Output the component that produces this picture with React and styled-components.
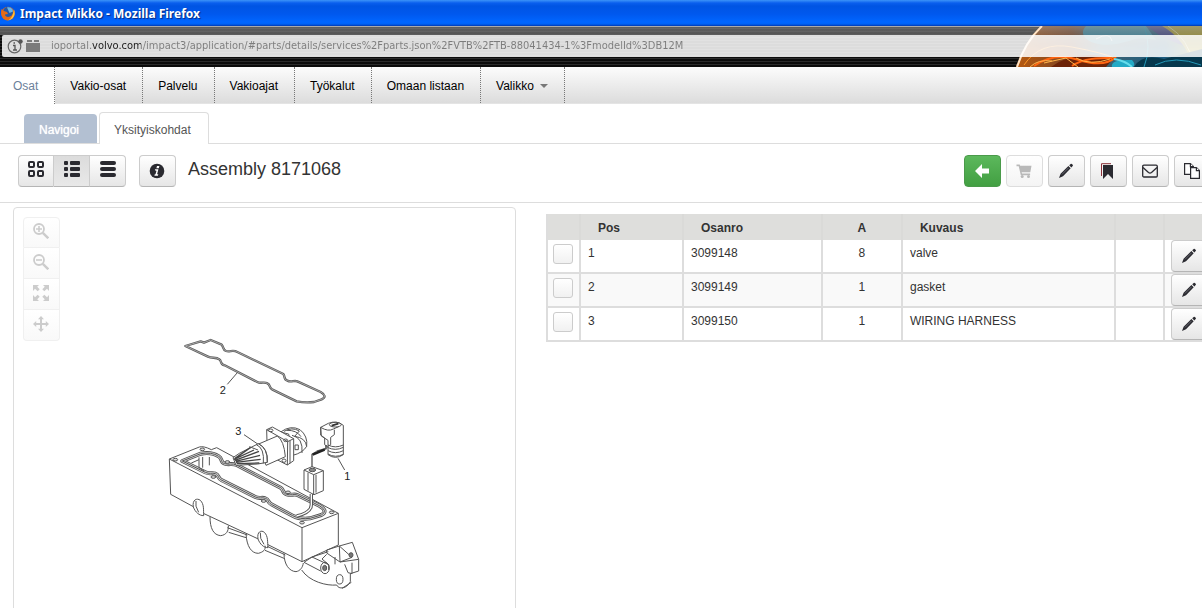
import React, { useState } from 'react'
import styled, { createGlobalStyle, css } from 'styled-components'

const GlobalStyle = createGlobalStyle`
  * {
    box-sizing: border-box;
  }

  body {
    margin: 0;
    overflow: hidden;
    background: #fff;
    color: #333;
    font-family: "Liberation Sans", Arial, sans-serif;
    font-size: 12px;
    line-height: 18px;
  }
`

const TitleBar = styled.header`
  display: flex;
  align-items: center;
  gap: 4px;
  height: 26px;
  padding-top: 1px;
  background: linear-gradient(#3c93f8 0, #0a5fee 3px, #0054e3 6px, #0058ee 14px, #0066ff 22px, #0062f5 24px, #0038b0 26px);
  color: #fff;
  font: bold 12px/18px "Noto Sans", sans-serif;
  text-shadow: 1px 1px 1px #0a2a80;
`

const AddressBar = styled.div`
  position: relative;
  height: 41px;
  padding: 9px 0 10px 2px;
  overflow: hidden;
  background:
    linear-gradient(#aaa 0, #aaa 1px, rgba(130, 130, 130, 0.7) 1px, rgba(110, 110, 110, 0.7) 9px, transparent 9px),
    repeating-linear-gradient(#0c0c0c 0, #0c0c0c 2px, #2b2b2b 2px, #2b2b2b 3px);
`

const ThemeArt = styled.svg`
  position: absolute;
  top: 0;
  right: 0;
`

const AddressField = styled.label`
  position: relative;
  display: flex;
  align-items: center;
  gap: 7px;
  height: 22px;
  padding-left: 5px;
  border-radius: 2px 0 0 2px;
  background: rgba(255, 255, 255, 0.86);
`

// the host part of the address is darker than the rest
const AddressInput = styled.input`
  flex: 1;
  min-width: 0;
  height: 20px;
  padding: 0;
  border: 0;
  outline: none;
  background: linear-gradient(90deg, #7c7c7c 41px, #1c1c1c 41px, #1c1c1c 90px, #7c7c7c 90px);
  background-clip: text;
  color: transparent;
  font: 11px/20px "DejaVu Sans Condensed", "Noto Sans", sans-serif;
`

const Nav = styled.nav`
  display: flex;
  height: 37px;
  background: linear-gradient(#fcfcfc, #dcdcdc);
  border-bottom: 1px solid #e4e4e4;
`

const NavLink = styled.a`
  display: flex;
  align-items: center;
  gap: 6px;
  padding: 2px 16px 0 15px;
  border-right: 1px dotted #777;
  color: #000;
  text-decoration: none;

  ${props => props.$active && css`
    margin-bottom: -1px;
    padding-top: 0;
    padding-left: 13px;
    background: #fff;
    color: #6c7f9a;
  `}
`

const Caret = styled.span`
  border: 4px solid transparent;
  border-top-color: #777;
  border-bottom: 0;
`

const Tabs = styled.div`
  display: flex;
  align-items: flex-end;
  gap: 2px;
  height: 40px;
  padding-left: 24px;
  border-bottom: 1px solid #ddd;
`

const Tab = styled.a`
  height: 29px;
  padding: 7px 18px 0 15px;
  border-radius: 4px 4px 0 0;
  background: #b3c0d2;
  color: #fff;
  text-decoration: none;
  text-shadow: 0 0 1px #fff;

  ${props => props.$active && css`
    height: 32px;
    margin-bottom: -1px;
    padding: 8px 17px 0 14px;
    border: 1px solid #ddd;
    border-bottom: 0;
    background: #fff;
    color: #555;
    text-shadow: none;
  `}
`

const Toolbar = styled.div`
  display: flex;
  align-items: center;
  height: 59px;
  margin-right: -9px;
  padding: 0 0 4px 18px;
  border-bottom: 1px solid #ddd;
`

const Button = styled.button`
  display: inline-flex;
  align-items: center;
  justify-content: center;
  width: 37px;
  height: 32px;
  padding: 0 1px 0 0;
  border: 1px solid #ccc;
  border-bottom-color: #b5b5b5;
  border-radius: 4px;
  background: linear-gradient(#fff, #e6e6e6);
  color: #2a2a30;

  &:disabled {
    border-color: #ddd;
    background: linear-gradient(#fff, #f4f4f4);
    color: #b9b9b9;
  }

  ${props => props.$success && css`
    border-color: #4a9a4a;
    background: linear-gradient(#5cb85c, #429f42);
    color: #fff;
  `}
`

const ButtonGroup = styled.div`
  display: flex;
  margin-right: 13px;

  ${Button} {
    width: 36px;
    padding: 0 0 4px;
    border-radius: 0;
  }

  ${Button}:first-child {
    border-radius: 4px 0 0 4px;
  }

  ${Button}:last-child {
    border-radius: 0 4px 4px 0;
  }

  ${Button} + ${Button} {
    border-left: 0;
  }

  ${Button}[aria-pressed="true"] {
    background: linear-gradient(#dcdcdc, #e8e8e8);
  }
`

const Heading = styled.h1`
  margin: 0 auto 4px 12px;
  font-size: 18px;
  font-weight: 400;
  line-height: 24px;
`

const Actions = styled.div`
  display: flex;
  gap: 5px;
`

const Content = styled.main`
  display: grid;
  grid-template-columns: 23fr 30fr;
  gap: 30px;
  padding: 4px 0 0 13px;
`

const Viewer = styled.section`
  position: relative;
  display: flex;
  justify-content: center;
  min-height: 440px;
  padding: 122px 0 0 2px;
  border: 1px solid #ddd;
  border-radius: 4px;
`

const ZoomControls = styled.div`
  position: absolute;
  top: 9px;
  left: 9px;
  display: flex;
  flex-direction: column;
`

const ZoomButton = styled.button`
  display: flex;
  align-items: center;
  justify-content: center;
  width: 37px;
  height: 31px;
  padding: 0 1px 3px 0;
  border: 1px solid #f0f0f0;
  border-top-width: 0;
  background: linear-gradient(#fff, #f9f9f9);
  color: #ccc;

  &:first-child {
    border-top-width: 1px;
    border-radius: 4px 4px 0 0;
  }

  &:last-child {
    border-radius: 0 0 4px 4px;
  }
`

const PartsSection = styled.section`
  margin-right: -43px;
  padding-top: 7px;
`

const PartsTable = styled.table`
  width: 100%;
  table-layout: fixed;
  border-collapse: separate;
  border-spacing: 0;
  border-left: 2px solid #ddd;
`

const HeadCell = styled.th`
  width: ${props => props.$width || 'auto'};
  height: 26px;
  padding: ${props => props.$center ? '2px 0 0' : '2px 0 0 17px'};
  border-right: 2px solid #dadad8;
  background: #dededc;
  text-align: ${props => props.$center ? 'center' : 'left'};
`

const Row = styled.tr`
  background: #fff;

  &:nth-child(even) {
    background: #f9f9f9;
  }
`

const Cell = styled.td`
  height: 34px;
  padding: ${props => props.$control ? '0 0 0 6px' : '4px 7px 0'};
  border-right: 2px solid #ddd;
  border-bottom: 2px solid #ddd;
  text-align: ${props => props.$center ? 'center' : 'left'};
  vertical-align: top;

  ${Button} {
    display: flex;
  }
`

const Checkbox = styled.input`
  display: block;
  appearance: none;
  width: 20px;
  height: 20px;
  margin: 4px 0 0 -1px;
  border: 1px solid #ccc;
  border-radius: 3px;
  background: linear-gradient(#fff, #f1f1f1);

  &:checked {
    background: #b3c0d2;
  }
`

const Icon = ({ size = 16, children }) => (
  <svg width={size} height={size} viewBox="0 0 16 16" fill="currentColor" aria-hidden="true">{children}</svg>
)

const GridIcon = () => (
  <Icon>
    <g fill="none" stroke="currentColor" strokeWidth="2">
      <rect x="1" y="1" width="5" height="5" rx="1" />
      <rect x="10" y="1" width="5" height="5" rx="1" />
      <rect x="1" y="10" width="5" height="5" rx="1" />
      <rect x="10" y="10" width="5" height="5" rx="1" />
    </g>
  </Icon>
)

const ListIcon = () => (
  <Icon>
    {[0, 6, 12].map(y => (
      <g key={y}>
        <rect x="0" y={y} width="4" height="4" rx="1" />
        <rect x="6" y={y} width="10" height="4" rx="1" />
      </g>
    ))}
  </Icon>
)

const BarsIcon = () => (
  <Icon>
    {[0, 6, 12].map(y => <rect key={y} x="0" y={y} width="16" height="4" rx="2" />)}
  </Icon>
)

const InfoIcon = () => (
  <Icon>
    <circle cx="8" cy="8" r="7.3" />
    <path d="M8 3h2.4l-.6 2.2H7.4zM5.8 6.3h3.6l-1.3 5h1.2l-.4 1.4H5.4l.4-1.4h.7l1-3.6h-1z" fill="#fff" />
  </Icon>
)

const ArrowIcon = () => (
  <Icon>
    <path d="M1 8 8 1v4.6h7v4.8H8V15z" />
  </Icon>
)

const CartIcon = () => (
  <Icon>
    <path d="M.5 1.5h3.2l.5 1.3h11.3l-1.2 6.4H5.6l.5 1.3h8v1.7H4.8L2.7 3.2H.5z" />
    <circle cx="6.2" cy="13.6" r="1.5" />
    <circle cx="12.5" cy="13.6" r="1.5" />
  </Icon>
)

const PencilIcon = () => (
  <Icon>
    <path d="M11.2 2.2 13 .7c.6-.4 2.4 1.4 1.900 2L13.400 4.500zM10.400 3l2.300 2.300-7.700 8L1 15l1.600-4.200z" />
    <path d="M4 11.400 10.600 4.800" stroke="#8d8d98" strokeWidth=".6" />
  </Icon>
)

const BookmarkIcon = () => (
  <Icon>
    <path d="M1.500 13V.7H11" fill="none" stroke="#8c3038" strokeWidth="1" />
    <path d="M3 2h10v14l-5-5-5 5z" />
  </Icon>
)

const MailIcon = () => (
  <Icon>
    <g fill="none" stroke="currentColor" strokeWidth="1.300">
      <rect x=".7" y="2.200" width="14.600" height="11.800" rx="1.200" />
      <path d="m1 4.500 5.500 5q1.500 1.200 3 0l5.500-5" />
    </g>
  </Icon>
)

const CopyIcon = () => (
  <Icon>
    <g fill="#fff" stroke="currentColor" strokeWidth="1.200">
      <path d="M.6.6h5.800l3 3v7.800H.6z" />
      <path d="M6.400.6v3h3" />
      <path d="M6.600 4.600h5.800l3 3v7.800H6.600z" />
      <path d="M12.400 4.600v3h3" />
    </g>
  </Icon>
)

const ZoomIcon = ({ plus }) => (
  <Icon>
    <g fill="none" stroke="currentColor">
      <circle cx="6" cy="6" r="5" strokeWidth="1.800" />
      <path d="m9.800 9.800 5.500 5.500" strokeWidth="2.400" />
      <path d={plus ? 'M3 6h6M6 3v6' : 'M3 6h6'} strokeWidth="1.600" />
    </g>
  </Icon>
)

const ExpandIcon = () => (
  <Icon>
    <path d="M0 0h6L4.200 1.800 6.700 4.300 4.700 6.300 2 3.800 0 6zM16 0h-6l1.800 1.800-2.500 2.500 2 2L14 3.800l2 2.200zM0 16h6l-1.800-1.800 2.500-2.500-2-2L2 12.200 0 10zM16 16h-6l1.800-1.800-2.500-2.500 2-2 2.700 2.500 2-2.200z" />
  </Icon>
)

const MoveIcon = () => (
  <Icon>
    <path d="m8 0 3 3.200H9V7h3.800V5L16 8l-3.200 3V9H9v3.800h2L8 16l-3-3.200h2V9H3.200v2L0 8l3.200-3v2H7V3.200H5z" />
  </Icon>
)

const FirefoxLogo = () => (
  <svg width="16" height="16" viewBox="0 0 16 16" aria-hidden="true">
    <circle cx="8" cy="7.500" r="6.800" fill="#e66b16" />
    <circle cx="8" cy="6" r="5" fill="#2459a8" />
    <path d="M7 1.500c3-1 6 1 6 4L9.500 7z" fill="#6ab5e6" />
    <path d="M1.500 3C0 9 3 14.500 8 14.500l1-3c-3 0-4-1.500-4-3l3-.5-1-2C5 5.500 3 4.500 1.500 3z" fill="#e66b16" />
    <path d="M14 3.500c2 5-.5 10-6 11 3-1.500 5-5 6-11z" fill="#fbc43c" />
  </svg>
)

const SiteIcons = () => (
  <svg width="37" height="16" viewBox="0 0 37 16" aria-hidden="true">
    <circle cx="7.500" cy="8.500" r="6.300" fill="none" stroke="#666" strokeWidth="1.200" />
    <path d="M6 7.500h2V12M6 12h4M6.500 5H8" fill="none" stroke="#555" strokeWidth="1.300" />
    <circle cx="13.500" cy="3.500" r="2.200" fill="#555" />
    <path d="M19 5h14v9H19zM20 2h5v2h-5zM27 2h5v2h-5z" fill="#7b7b7b" />
  </svg>
)

const GlassBall = () => (
  <ThemeArt width="186" height="41" viewBox="0 0 186 41" aria-hidden="true">
    <defs>
      <linearGradient id="ball">
        <stop offset="0" stopColor="#b75a10" />
        <stop offset=".3" stopColor="#7a4424" />
        <stop offset=".45" stopColor="#3f6472" />
        <stop offset=".8" stopColor="#1d5c80" />
        <stop offset="1" stopColor="#8a8a28" />
      </linearGradient>
      <linearGradient id="sheen" x2="0" y2="1">
        <stop offset="0" stopColor="#999" stopOpacity=".6" />
        <stop offset=".25" stopColor="#777" stopOpacity=".4" />
        <stop offset=".6" stopColor="#000" stopOpacity="0" />
      </linearGradient>
    </defs>
    <path d="M0 41Q8 16 25 0h161v41z" fill="url(#ball)" />
    <path d="M70 0c-10 10 6 22 30 18s14-8 40-4L130 0z" fill="#358ba6" />
    <path d="M130 0h22l16 20-20-8z" fill="#3c3f86" />
    <path d="M146 0q22 12 32 41h8V0z" fill="#a99b2b" />
    <path d="M152 0q20 12 27 41" stroke="#d8d48c" strokeWidth="1" fill="none" />
    <path d="M35 41q24-18 63-9l-8 9z" fill="#6d2408" />
    <path d="M96 41q-2-8 20-7 4 4 1 7z" fill="#23aac6" />
    <path d="M118 41q8-14 30-8l38-10v18z" fill="#06384d" />
    <g fill="none" strokeWidth="1">
      <path d="M8 39q16-24 48-18t42 11" stroke="#ff9826" />
      <path d="M18 40q20-14 45-6t37-3M56 40q12-9 40-8" stroke="#ff6511" strokeWidth="2" />
      <path d="M28 37l22-5 12 9M60 32q14 8 34 1M14 41q8-8 22-6" stroke="#ffb44b" />
      <path d="M98 33q12 2 18 8" stroke="#65ddec" strokeWidth="2" />
      <path d="M128 41q8-20 0-41M139 39q20-10 46 0" stroke="#2398b8" />
      <path d="M80 13q14-8 16 2" stroke="#d9f2f5" />
    </g>
    <path d="M0 41Q8 16 25 0h161v41z" fill="url(#sheen)" />
    <path d="M1 41Q9 16 26 0" fill="none" stroke="#ffe3c4" strokeWidth="2" />
  </ThemeArt>
)

const gasket = 'M106 48 152 34 162 38 182 30 215 44C222 52 218 60 228 63C240 67 248 58 262 66L400 132C406 140 400 148 412 152C424 158 432 150 442 154L512 186C526 194 528 202 515 208L492 216C475 218 455 217 440 214L366 178C356 172 362 164 352 160C342 154 334 162 322 156L224 106C208 102 216 92 208 88C198 80 186 86 174 80Z'

const groove = 'M97 78 152 56Q185 50 206 64C218 70 210 82 224 86C238 90 246 84 260 90L392 158C402 164 396 174 410 178C424 182 432 176 442 180L508 212Q536 228 514 240L480 250Q450 254 428 242L364 208C352 202 358 194 346 190C336 186 328 192 316 186L216 136C202 130 208 120 196 116C186 112 178 118 166 112Z'

const bolts = [[76, 74], [157, 43], [232, 81], [190, 126], [341, 198], [414, 172], [545, 232], [456, 263]]

const AssemblyDrawing = () => (
  <svg width="210" height="270" viewBox="30 0 630 810" fill="none" stroke="#555" strokeWidth="3" strokeLinejoin="round" role="img" aria-label="Assembly drawing">
    <path d={gasket} stroke="#5a5a5a" strokeWidth="7" />
    <path d={gasket} stroke="#ccc" strokeWidth="2" />
    <path d="M262 128 232 163M282 314 326 344M564 385 584 420" />

    <g transform="translate(0 315)">
      <path d="M58 72 148 36Q160 32 184 44L200 38 565 235V330M58 72 456 278V380M58 72 62 178 130 215M456 278 565 235M160 235 325 312M352 328 456 380 565 330" />
      <path d={groove} stroke="#555" strokeWidth="12" />
      <path d={groove} stroke="#ddd" strokeWidth="7" />
      <path d={groove} stroke="#555" strokeWidth="3" />
      <path d="M147 67V98L162 108M158 66V98M178 66V91M147 74 124 84" />
      <path d="M130 216C126 194 141 188 151 196C163 208 160 224 161 242C148 242 136 232 130 216ZM138 198Q134 212 146 232" fill="#fff" />
      <path d="M324 312C320 290 334 284 343 292C355 304 352 320 354 338C341 338 330 328 324 312ZM331 293Q328 310 342 328" fill="#fff" />
      <path d="M180 245C180 280 190 300 212 302C229 300 236 288 235 272M236 292 288 308M232 278 292 300" />
      <path d="M288 296C290 334 304 355 325 355C340 351 348 344 345 332M345 346 402 370M352 334 406 360" />
      <path d="M402 355C402 389 418 409 438 410C450 408 458 398 460 384M455 405C478 440 530 453 560 450C566 464 590 462 601 440V416L626 408V373L607 322 568 333 530 345V354L570 381 626 373M570 381 606 367 568 333ZM606 383V416M462 382 486 366 535 350M486 366 536 389M462 382 512 408M530 358 516 372 536 389V405M555 366V388M584 388 594 413 606 416M576 460 604 442" />
      <ellipse cx="525" cy="399" rx="13" ry="17" />
      <ellipse cx="524" cy="399" rx="6" ry="8" fill="#777" />
      <ellipse cx="569" cy="433" rx="10" ry="14" />
      <ellipse cx="603" cy="360" rx="6" ry="7" fill="#777" />
      {bolts.map(([x, y]) => (
        <ellipse key={`${x}-${y}`} cx={x} cy={y} rx="7" ry="4" fill="#ddd" />
      ))}
    </g>

    {/* wiring harness plug */}
    <path d="M392 306Q422 284 450 299Q474 318 470 349Q458 369 428 376L416 312Z" fill="#fff" />
    <path d="M402 304Q426 290 448 303L434 319Q468 324 470 350M426 316Q460 323 456 369M435 345h10v14h-10zM410 301Q440 300 453 320" />
    <path d="M350 299 367 291 431 326V392L412 405 352 374Z" fill="#fff" />
    <path d="M350 299 413 335 431 326M413 335 412 405M420 332V400" />
    <ellipse cx="362" cy="301" rx="7" ry="4" />
    <ellipse cx="407" cy="331" rx="6" ry="4" />
    <ellipse cx="402" cy="392" rx="6" ry="5" />
    <path d="M326 342 382 318Q402 332 406 380L348 406Z" fill="#fff" />
    <path d="M325 341Q354 354 352 397L323 402 258 406 249 383 268 370Z" fill="#fff" />
    <path d="M254 386 302 352M252 388 312 360M255 391 327 364M257 394 330 376M258 397 332 388M260 401 328 399" stroke="#444" strokeWidth="4" />
    <path d="M325 341Q354 354 352 397M319 344Q344 354 340 400M298 350 324 360" />

    {/* valve */}
    <path d="M512 292 535 280Q560 270 580 286V374Q556 390 534 374V331L514 318Z" fill="#fff" />
    <path d="M512 292Q535 306 550 297L566 290M512 292V315L524 324V344L532 350 542 344V322L553 314V299M534 345Q556 356 580 345M532 352Q556 364 580 352M534 362Q556 374 580 362M534 372Q556 385 580 373" />
    <ellipse cx="556" cy="284" rx="18" ry="7" />
    <path d="m545 287 20-6" stroke="#333" strokeWidth="6" />
    <path d="M528 345V356L500 364" strokeWidth="5" />
    <path d="M500 365 486 373V414" strokeWidth="4" />
    <path d="M524 359 488 374" stroke="#222" strokeWidth="7" />

    {/* cable box */}
    <path d="M484 492V524Q484 548 440 558" stroke="#555" strokeWidth="10" />
    <path d="M484 492V524Q484 548 440 558" stroke="#fff" strokeWidth="4" />
    <path d="M462 420 486 410 520 422V482L492 494 462 478Z" fill="#fff" />
    <path d="M462 420 491 434 520 422M491 434V494M474 428V482M498 434V488" />
    <ellipse cx="487" cy="420" rx="10" ry="5" fill="#888" />

    <g fill="#222" stroke="none" fontSize="33" fontFamily="Liberation Sans, Arial, sans-serif">
      <text x="209" y="192">2</text>
      <text x="256" y="314">3</text>
      <text x="583" y="450">1</text>
    </g>
  </svg>
)

const navItems = ['Osat', 'Vakio-osat', 'Palvelu', 'Vakioajat', 'Työkalut', 'Omaan listaan', 'Valikko']

const views = [
  { name: 'Grid', icon: <GridIcon /> },
  { name: 'List', icon: <ListIcon /> },
  { name: 'Rows', icon: <BarsIcon /> }
]

const zoomTools = [
  { name: 'Zoom in', icon: <ZoomIcon plus /> },
  { name: 'Zoom out', icon: <ZoomIcon /> },
  { name: 'Fit', icon: <ExpandIcon /> },
  { name: 'Move', icon: <MoveIcon /> }
]

const parts = [
  { pos: 1, number: '3099148', amount: 8, description: 'valve' },
  { pos: 2, number: '3099149', amount: 1, description: 'gasket' },
  { pos: 3, number: '3099150', amount: 1, description: 'WIRING HARNESS' }
]

const PartRow = ({ part }) => (
  <Row>
    <Cell $control><Checkbox type="checkbox" aria-label={`Select ${part.number}`} /></Cell>
    <Cell>{part.pos}</Cell>
    <Cell>{part.number}</Cell>
    <Cell $center>{part.amount}</Cell>
    <Cell>{part.description}</Cell>
    <Cell />
    <Cell $control><Button aria-label={`Edit ${part.number}`}><PencilIcon /></Button></Cell>
  </Row>
)

export default function App() {
  const [view, setView] = useState('List')

  return (
    <>
      <GlobalStyle />
      <TitleBar>
        <FirefoxLogo />
        Impact Mikko - Mozilla Firefox
      </TitleBar>
      <AddressBar>
        <GlassBall />
        <AddressField>
          <SiteIcons />
          <AddressInput
            type="text"
            aria-label="Address"
            defaultValue="ioportal.volvo.com/impact3/application/#parts/details/services%2Fparts.json%2FVTB%2FTB-88041434-1%3FmodelId%3DB12M"
          />
        </AddressField>
      </AddressBar>
      <Nav>
        {navItems.map((item, i) => (
          <NavLink key={item} href="#" $active={i === 0}>
            {item}
            {item === 'Valikko' && <Caret />}
          </NavLink>
        ))}
      </Nav>
      <Tabs>
        <Tab href="#">Navigoi</Tab>
        <Tab href="#" $active>Yksityiskohdat</Tab>
      </Tabs>
      <Toolbar>
        <ButtonGroup>
          {views.map(({ name, icon }) => (
            <Button key={name} aria-label={name} aria-pressed={view === name} onClick={() => setView(name)}>{icon}</Button>
          ))}
        </ButtonGroup>
        <Button aria-label="Info"><InfoIcon /></Button>
        <Heading>Assembly 8171068</Heading>
        <Actions>
          <Button $success aria-label="Back"><ArrowIcon /></Button>
          <Button disabled aria-label="Cart"><CartIcon /></Button>
          <Button aria-label="Edit"><PencilIcon /></Button>
          <Button aria-label="Bookmark"><BookmarkIcon /></Button>
          <Button aria-label="Mail"><MailIcon /></Button>
          <Button aria-label="Copy"><CopyIcon /></Button>
        </Actions>
      </Toolbar>
      <Content>
        <Viewer>
          <ZoomControls>
            {zoomTools.map(({ name, icon }) => (
              <ZoomButton key={name} aria-label={name}>{icon}</ZoomButton>
            ))}
          </ZoomControls>
          <AssemblyDrawing />
        </Viewer>
        <PartsSection>
          <PartsTable>
            <thead>
              <tr>
                <HeadCell $width="33px" />
                <HeadCell $width="103px">Pos</HeadCell>
                <HeadCell $width="139px">Osanro</HeadCell>
                <HeadCell $width="80px" $center>A</HeadCell>
                <HeadCell>Kuvaus</HeadCell>
                <HeadCell $width="49px" />
                <HeadCell $width="80px" />
              </tr>
            </thead>
            <tbody>
              {parts.map(part => <PartRow key={part.pos} part={part} />)}
            </tbody>
          </PartsTable>
        </PartsSection>
      </Content>
    </>
  )
}
